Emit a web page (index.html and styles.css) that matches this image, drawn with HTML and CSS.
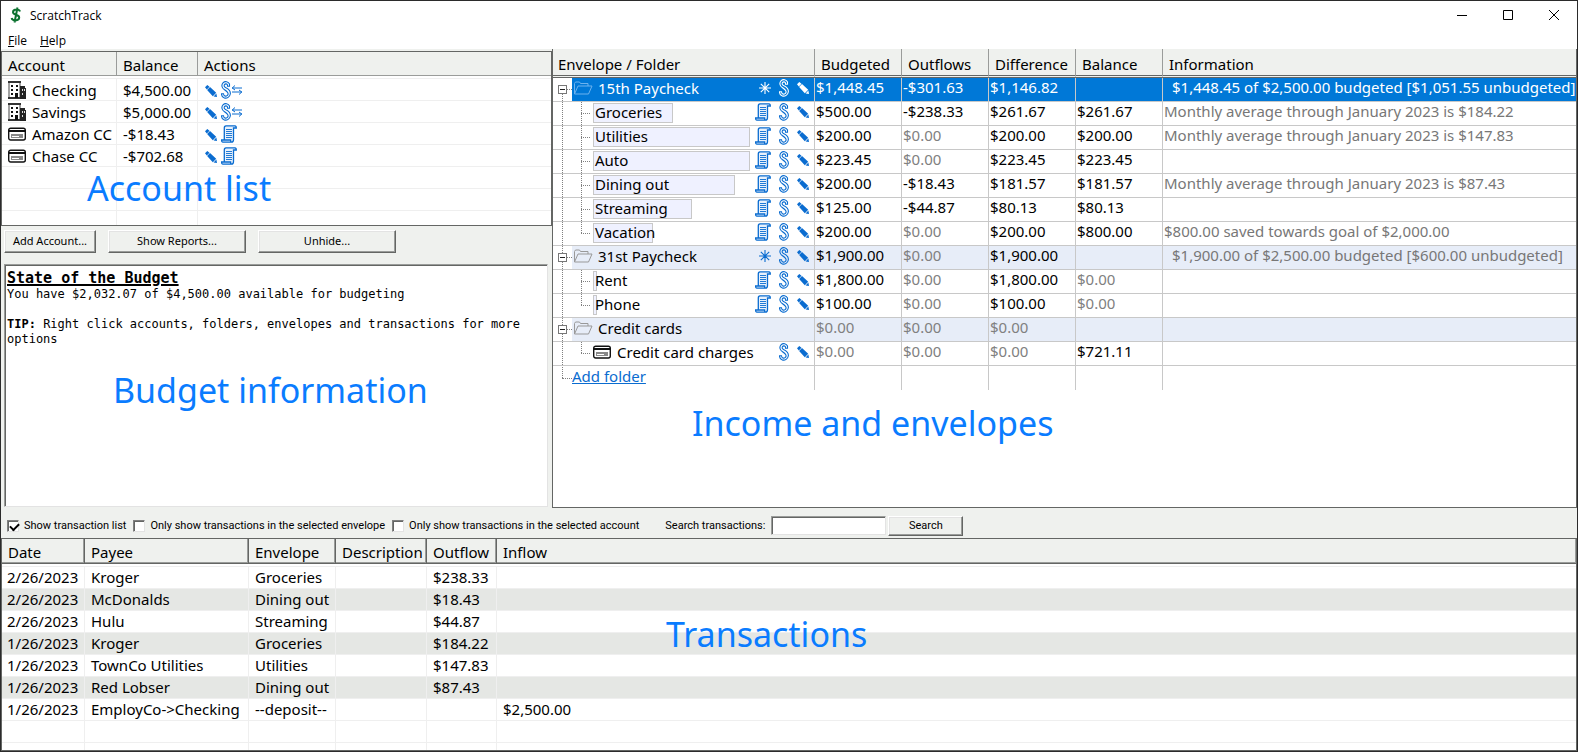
FILE: index.html
```
<!DOCTYPE html>
<html lang="en">
  <head>
    <meta charset="utf-8">
    <meta name="viewport" content="width=device-width, initial-scale=1">
    <title>ScratchTrack</title>
    <link rel="stylesheet" href="styles.css">
  </head>
  <body>

  <!-- Icons
  ================================================== -->
  <svg class="sprite" aria-hidden="true">
    <symbol id="bank" viewBox="0 0 18 18">
      <path d="M1 1h11v16H1z" fill="#fff" stroke="#444"/>
      <path d="M0 0h13v2H0zM0 16h18v2H0z" fill="#333"/>
      <path d="M3 4h2v2H3zM8 4h2v2H8zM3 8h2v2H3zM8 8h2v2H8zM3 12h2v2H3zM7 12h3v5H7z" fill="#111"/>
      <path d="M12 5h5v2h1v11h-6z" fill="#222"/>
      <path d="M14 8h1v2h-1zM16 8h1v2h-1zM14 12h1v2h-1z" fill="#ddd"/>
    </symbol>
    <symbol id="card" viewBox="0 0 18 14">
      <rect x=".7" y="1.200" width="16.600" height="11.800" rx="2" fill="#fff" stroke="#111" stroke-width="1.400"/>
      <path d="M1 3h16v2H1z" fill="#111"/>
      <path d="M3 7h12v4H3z" fill="#888"/>
      <path d="M4 9.500h7" stroke="#fff"/>
    </symbol>
    <symbol id="pencil" viewBox="0 0 12 12">
      <path d="M0 2.300L2.300 0l2.200 1.800-2.700 2.700zM2.100 5L5 2.100l6.200 5.700-3.400 3.400zM8.600 11.400l2.800-2.800L12 12z" fill="currentColor"/>
    </symbol>
    <symbol id="chain" viewBox="0 0 10 18">
      <path d="M3.200 8.500C.5 7 .3 3.500 2 1.800 4-.2 7.500.5 8.500 3v2.200H6.500V4C6 2.700 4.300 2.500 3.500 3.600 2.700 5 3.500 6 5 6.800c3 1.500 4.700 3.700 4.300 6.200-.5 3-3.300 4.700-6 4-1.800-.5-2.800-2-2.800-4.200h2c0 1.200.5 2 1.600 2.300 1.600.3 2.900-.8 3-2.200.1-1.600-1.200-2.600-3.900-4.400z" fill="none" stroke="currentColor" stroke-width="1.100"/>
    </symbol>
    <symbol id="swap" viewBox="0 0 12 10">
      <path d="M1 3h10M4 .5L1.200 3 4 5M1 7h10M8 5l2.800 2L8 9.500" fill="none" stroke="currentColor"/>
    </symbol>
    <symbol id="scroll" viewBox="0 0 16 18">
      <path d="M3.300 15V3C3.300 1.300 4 .8 5 .8h9c1 0 1.300 1 1.300 2.200H12.500v11.500c0 1.800-.8 2.700-2 2.700H2C.8 17.200.6 16 .6 15h9c0 1.500.5 2.200 1.200 2.200" fill="#e8f1fc" stroke="currentColor" stroke-width="1.300"/>
      <path d="M5 4.500h6M5 6.500h6M5 8.500h6M5 10.500h6M5 12.500h6" stroke="currentColor" stroke-width=".9"/>
    </symbol>
    <symbol id="star" viewBox="0 0 12 12">
      <path d="M6 0v12M0 6h12M1.800 1.800l8.400 8.400M10.200 1.800l-8.400 8.400" stroke="currentColor" stroke-width="1.100"/>
    </symbol>
    <symbol id="folder" viewBox="0 0 20 14">
      <path d="M1.500 13V2.500l1-1.500h4l1 1.500h7.500V5M1.500 13L5 5h14l-3.500 8z" fill="none" stroke="currentColor"/>
    </symbol>
  </svg>

  <div class="window">
    <header class="titlebar">
      <svg class="logo" viewBox="0 0 12 16"><path d="M10 4.500C9.500 3 8.200 2.600 6.500 2.600c-2 0-3.500 1-3.500 2.600C3 8.300 9.200 7.300 9.200 10.600c0 1.800-1.700 2.800-3.700 2.800C3.500 13.400 2 12.600 1.600 11M7.500.5L4.500 15.500" fill="none" stroke="#0c7230" stroke-width="2"/></svg>
      <span class="caption">ScratchTrack</span>
      <button class="win-btn" aria-label="Minimize"><svg viewBox="0 0 10 10"><path d="M0 5.500h10"/></svg></button>
      <button class="win-btn" aria-label="Maximize"><svg viewBox="0 0 10 10"><path d="M.5.5h9v9h-9z"/></svg></button>
      <button class="win-btn" aria-label="Close"><svg viewBox="0 0 10 10"><path d="M0 0l10 10M10 0L0 10"/></svg></button>
    </header>
    <nav class="menu">
      <button><u>F</u>ile</button>
      <button><u>H</u>elp</button>
    </nav>

    <main class="panes">
      <section class="left">
        <div class="accounts">
          <table class="list account-list">
            <colgroup><col class="c-account"><col class="c-amount"><col></colgroup>
            <thead><tr><th>Account</th><th>Balance</th><th>Actions</th></tr></thead>
            <tbody>
              <tr><td><svg class="i18"><use href="#bank"/></svg>Checking</td><td>$4,500.00</td><td class="acts"><svg class="i12"><use href="#pencil"/></svg><svg class="chain"><use href="#chain"/></svg><svg class="swap"><use href="#swap"/></svg></td></tr>
              <tr><td><svg class="i18"><use href="#bank"/></svg>Savings</td><td>$5,000.00</td><td class="acts"><svg class="i12"><use href="#pencil"/></svg><svg class="chain"><use href="#chain"/></svg><svg class="swap"><use href="#swap"/></svg></td></tr>
              <tr><td><svg class="i18"><use href="#card"/></svg>Amazon CC</td><td>-$18.43</td><td class="acts"><svg class="i12"><use href="#pencil"/></svg><svg class="scroll"><use href="#scroll"/></svg></td></tr>
              <tr><td><svg class="i18"><use href="#card"/></svg>Chase CC</td><td>-$702.68</td><td class="acts"><svg class="i12"><use href="#pencil"/></svg><svg class="scroll"><use href="#scroll"/></svg></td></tr>
              <tr><td></td><td></td><td></td></tr>
              <tr><td></td><td></td><td></td></tr>
              <tr><td></td><td></td><td></td></tr>
            </tbody>
          </table>
          <div class="note note-accounts">Account list</div>
        </div>
        <div class="buttons">
          <button class="btn btn-add">Add Account...</button>
          <button class="btn btn-wide">Show Reports...</button>
          <button class="btn btn-wide">Unhide...</button>
        </div>
        <div class="budget">
          <h2>State of the Budget</h2>
          <p>You have $2,032.07 of $4,500.00 available for budgeting</p>
          <p><b>TIP:</b> Right click accounts, folders, envelopes and transactions for more options</p>
          <div class="note note-budget">Budget information</div>
        </div>
      </section>

      <section class="right">
        <table class="tree">
          <colgroup><col class="c-name"><col class="c-money"><col class="c-money"><col class="c-money"><col class="c-money"><col></colgroup>
          <thead><tr><th>Envelope / Folder</th><th>Budgeted</th><th>Outflows</th><th>Difference</th><th>Balance</th><th>Information</th></tr></thead>
          <tbody id="envelopes"></tbody>
        </table>
        <div class="note note-envelopes">Income and envelopes</div>
      </section>
    </main>

    <form class="filters" onsubmit="return false">
      <label><input type="checkbox" checked>Show transaction list</label>
      <label><input type="checkbox">Only show transactions in the selected envelope</label>
      <label><input type="checkbox">Only show transactions in the selected account</label>
      <label class="search-label" for="search">Search transactions:</label>
      <input type="text" id="search">
      <button class="btn btn-search">Search</button>
    </form>

    <section class="transactions">
      <table class="list transaction-list">
        <colgroup><col class="c-date"><col class="c-payee"><col class="c-envelope"><col class="c-desc"><col class="c-outflow"><col></colgroup>
        <thead><tr><th>Date</th><th>Payee</th><th>Envelope</th><th>Description</th><th>Outflow</th><th>Inflow</th></tr></thead>
        <tbody>
          <tr><td>2/26/2023</td><td>Kroger</td><td>Groceries</td><td></td><td>$238.33</td><td></td></tr>
          <tr><td>2/26/2023</td><td>McDonalds</td><td>Dining out</td><td></td><td>$18.43</td><td></td></tr>
          <tr><td>2/26/2023</td><td>Hulu</td><td>Streaming</td><td></td><td>$44.87</td><td></td></tr>
          <tr><td>1/26/2023</td><td>Kroger</td><td>Groceries</td><td></td><td>$184.22</td><td></td></tr>
          <tr><td>1/26/2023</td><td>TownCo Utilities</td><td>Utilities</td><td></td><td>$147.83</td><td></td></tr>
          <tr><td>1/26/2023</td><td>Red Lobser</td><td>Dining out</td><td></td><td>$87.43</td><td></td></tr>
          <tr><td>1/26/2023</td><td>EmployCo-&gt;Checking</td><td>--deposit--</td><td></td><td></td><td>$2,500.00</td></tr>
          <tr class="blank"><td></td><td></td><td></td><td></td><td></td><td></td></tr>
          <tr class="blank"><td></td><td></td><td></td><td></td><td></td><td></td></tr>
        </tbody>
      </table>
      <div class="note note-transactions">Transactions</div>
    </section>
  </div>

  <script src="envelopes.js"></script>
  </body>
</html>
```

FILE: styles.css
```
* {
  box-sizing: border-box;
}
html, body {
  height: 100%;
}
body {
  margin: 0;
  font-family: "Noto Sans", "Open Sans", sans-serif;
  font-size: 15px;
  color: #000;
}
button, input {
  font-family: inherit;
}
table {
  width: 100%;
  table-layout: fixed;
  border-collapse: separate;
  border-spacing: 0;
}
th, td {
  padding: 0;
  text-align: left;
  font-weight: normal;
  white-space: nowrap;
}
.sprite {
  position: absolute;
  width: 0;
  height: 0;
}
.window {
  display: flex;
  flex-direction: column;
  min-height: 100%;
  border: 1px solid #2b2b2b;
  background: #eff1ee;
}

/* title bar and menu */
.titlebar {
  display: flex;
  align-items: center;
  height: 30px;
  padding: 0 0 2px 9px;
  background: #fff;
  font-family: "Open Sans", sans-serif;
  font-size: 12px;
}
.logo {
  width: 12px;
  height: 16px;
  margin-right: 8px;
}
.caption {
  flex: 1;
}
.win-btn {
  width: 46px;
  height: 28px;
  padding: 0;
  border: 0;
  background: none;
}
.win-btn svg {
  display: block;
  width: 10px;
  height: 10px;
  margin: auto;
  fill: none;
  stroke: #000;
}
.menu {
  display: flex;
  gap: 13px;
  height: 18px;
  padding: 2px 0 0 7px;
  background: #fff;
}
.menu button {
  padding: 0;
  border: 0;
  background: none;
  font-family: "Open Sans", sans-serif;
  font-size: 12px;
  line-height: 16px;
}

/* panes */
.panes {
  display: flex;
  flex: 1;
}
.left {
  display: flex;
  flex-direction: column;
  flex: none;
  width: 551px;
  padding-top: 2px;
}
.accounts {
  position: relative;
  height: 175px;
  overflow: hidden;
  border: 1px solid #646664;
  background: #fff;
}
.list th {
  height: 24px;
  padding: 2px 0 0 6px;
  line-height: 20px;
  border-right: 1px solid #9a9c9a;
  border-bottom: 1px solid #9a9c9a;
  background: #eff1ee;
}
.list td {
  height: 22px;
  padding-left: 6px;
  line-height: 21px;
  border-right: 1px solid #efefef;
  border-bottom: 1px solid #efefef;
}
.list th:last-child, .list td:last-child {
  border-right: 0;
}
.list tbody::before {
  content: "";
  display: block;
  height: 2px;
}
.list tbody tr:first-child td {
  height: 23px;
  border-top: 1px solid #efefef;
}
.account-list td {
  padding-top: 2px;
  line-height: 19px;
}
.list svg {
  vertical-align: top;
}
.c-account {
  width: 115px;
}
.c-amount {
  width: 81px;
}
.i18 {
  width: 18px;
  height: 18px;
  margin-right: 6px;
}
.i12 {
  width: 12px;
  height: 12px;
}
.chain {
  width: 10px;
  height: 18px;
}
.swap {
  width: 12px;
  height: 10px;
}
.scroll {
  width: 16px;
  height: 18px;
}
.i12, .chain, .swap, .scroll, .star {
  color: #0a6cd0;
}
.acts .i12 {
  margin: 4px 4px 0 1px;
}
.acts .swap {
  margin-top: 4px;
}
.buttons {
  display: flex;
  gap: 12px;
  padding: 4px 3px 11px;
}
.btn {
  height: 23px;
  padding: 0 0 2px;
  border: 1px solid;
  border-color: #fff #646664 #646664 #fff;
  box-shadow: inset -1px -1px 0 #9a9c9a, inset 1px 1px 0 #e3e3e3;
  background: #eff1ee;
  font-size: 11px;
  color: #000;
}
.btn-add {
  width: 92px;
}
.btn-wide {
  width: 138px;
}
.budget {
  position: relative;
  flex: 1;
  margin: 0 4px 1px 3px;
  padding: 5px 1px;
  border: 1px solid;
  border-color: #9a9c9a #e3e3e3 #e3e3e3 #9a9c9a;
  box-shadow: inset 1px 1px 0 #646664;
  background: #fff;
  font-family: "DejaVu Sans Mono", "Liberation Mono", monospace;
  font-size: 12px;
  line-height: 15px;
}
.budget h2 {
  margin: 0;
  padding-left: 1px;
  font-size: 15px;
  line-height: 17px;
  text-decoration: underline;
  text-decoration-thickness: 2px;
}
.budget p {
  margin: 0 0 15px;
  padding-left: 1px;
}

/* envelope tree */
.right {
  position: relative;
  flex: 1;
  border: 1px solid #646664;
  border-top: 0;
  background: #fff;
}
.c-name {
  width: 262px;
}
.c-money {
  width: 87px;
}
.tree th {
  height: 29px;
  padding: 3px 0 0 5px;
  line-height: 20px;
  border-right: 1px solid #9a9c9a;
  border-bottom: 3px double #646664;
  background: #eff1ee;
}
.tree th + th {
  padding-left: 6px;
}
.tree td {
  height: 24px;
  padding: 0 0 4px 1px;
  line-height: 19px;
  border-right: 1px solid #c8c8c8;
  border-bottom: 1px solid #c8c8c8;
}
.tree td:last-child, .tree th:last-child {
  border-right: 0;
}
.tree td:last-child {
  color: #777;
}
.tree .zero {
  color: #808080;
}
.tree td:first-child {
  padding: 0;
}
.cell {
  display: flex;
  align-items: center;
  height: 23px;
}
.label {
  display: flex;
  align-items: center;
  flex: 1;
  height: 23px;
  padding-bottom: 3px;
}
.tools {
  display: flex;
  align-items: center;
  gap: 8px;
  margin-left: auto;
  padding-right: 5px;
}
.star {
  width: 12px;
  height: 12px;
}
.folder-icon {
  width: 20px;
  height: 14px;
  margin: 0 5px 0 1px;
  color: #999;
}
.folder td, .folder .label {
  background: #e7edf8;
}
.folder td:first-child {
  background: #fff;
}
.folder td:last-child {
  padding-left: 9px;
}
.selected td, .selected td:last-child, .selected .label {
  background: #0078d7;
  color: #fff;
}
.selected .folder-icon {
  color: #6cb2ee;
}
.selected .tools svg {
  color: #fff;
}
.add td {
  border-bottom: 0;
}
.add a {
  padding-bottom: 3px;
  color: #0a6cd0;
}
.twisty {
  flex: none;
  position: relative;
  width: 19px;
  height: 23px;
}
.twisty::before {
  content: "";
  position: absolute;
  left: 9px;
  top: 0;
  bottom: 0;
  border-left: 1px dotted #808080;
}
.selected .twisty::before {
  top: 12px;
}
.add .twisty::before {
  bottom: 12px;
}
.twisty::after, .branch::after {
  content: "";
  position: absolute;
  top: 11px;
  left: 9px;
  right: 0;
  border-top: 1px dotted #808080;
}
.child .twisty::after {
  display: none;
}
.toggle {
  position: absolute;
  z-index: 1;
  left: 5px;
  top: 7px;
  width: 9px;
  height: 9px;
  padding: 0;
  border: 1px solid #777;
  background: linear-gradient(#222, #222) center / 5px 1px no-repeat #fff;
}
.branch {
  position: relative;
  flex: none;
  width: 18px;
  height: 23px;
  margin-right: 3px;
}
.branch::before {
  content: "";
  position: absolute;
  left: 9px;
  top: 0;
  bottom: 0;
  border-left: 1px dotted #808080;
}
.last .branch::before {
  bottom: 12px;
}
.meter {
  display: block;
  height: 20px;
  margin-top: 1px;
  padding-left: 1px;
  line-height: 17px;
  border: 1px solid #c8c8c8;
  background: #eff1ff;
}
.card-icon {
  width: 18px;
  height: 18px;
  margin-right: 6px;
}

/* filter bar */
.filters {
  display: flex;
  align-items: center;
  height: 30px;
  padding: 5px 6px 0;
  font-family: Roboto, sans-serif;
  font-size: 11px;
}
.filters label {
  display: flex;
  align-items: center;
  margin-right: 7px;
}
.filters input[type="checkbox"] {
  appearance: none;
  width: 12px;
  height: 12px;
  margin: 0 5px 0 0;
  border: 1px solid;
  border-color: #808080 #e3e3e3 #e3e3e3 #808080;
  box-shadow: inset 1px 1px 0 #646664;
  background: #fff;
}
.filters input:checked::before {
  content: "";
  display: block;
  width: 7px;
  height: 4px;
  margin: 2px 0 0 2px;
  border: solid #000;
  border-width: 0 0 2px 2px;
  transform: rotate(-45deg);
}
.filters .search-label {
  margin: 0 6px 0 19px;
}
#search {
  width: 115px;
  height: 19px;
  margin-right: 2px;
  padding: 0 2px;
  border: 1px solid;
  border-color: #9a9c9a #e3e3e3 #e3e3e3 #9a9c9a;
  box-shadow: inset 1px 1px 0 #646664;
}
.btn-search {
  width: 75px;
  height: 20px;
  padding: 0;
}

/* transactions */
.transactions {
  position: relative;
  height: 213px;
  overflow: hidden;
  border: 1px solid #646664;
  background: #fff;
}
.transaction-list th {
  height: 25px;
  border-color: #646664;
  box-shadow: inset -1px -1px 0 #9a9c9a;
}
.transaction-list td:first-child {
  padding-left: 5px;
}
.transaction-list tr:nth-child(even) td {
  background: #e5e7e4;
}
.transaction-list .blank td, .transaction-list .blank:nth-child(even) td {
  background: #fff;
}
.c-date {
  width: 83px;
}
.c-payee {
  width: 164px;
}
.c-envelope {
  width: 87px;
}
.c-desc {
  width: 91px;
}
.c-outflow {
  width: 70px;
}

/* big captions over each area */
.note {
  position: absolute;
  font-family: "Noto Sans", sans-serif;
  font-size: 34px;
  line-height: 48px;
  color: #0a7cff;
  white-space: nowrap;
  pointer-events: none;
}
.note-accounts {
  left: 85px;
  top: 112px;
}
.note-budget {
  left: 108px;
  top: 101px;
}
.note-envelopes {
  left: 139px;
  top: 350px;
}
.note-transactions {
  left: 664px;
  top: 71px;
}
```

FILE: envelopes.js
```
// type, name, meter width, budgeted, outflows, difference, balance, information
var rows = [
  ["folder selected", "15th Paycheck", 0, "$1,448.45", "-$301.63", "$1,146.82", "", "$1,448.45 of $2,500.00 budgeted [$1,051.55 unbudgeted]"],
  ["child", "Groceries", 80, "$500.00", "-$238.33", "$261.67", "$261.67", "Monthly average through January 2023 is $184.22"],
  ["child", "Utilities", 157, "$200.00", "$0.00", "$200.00", "$200.00", "Monthly average through January 2023 is $147.83"],
  ["child", "Auto", 157, "$223.45", "$0.00", "$223.45", "$223.45", ""],
  ["child", "Dining out", 142, "$200.00", "-$18.43", "$181.57", "$181.57", "Monthly average through January 2023 is $87.43"],
  ["child", "Streaming", 99, "$125.00", "-$44.87", "$80.13", "$80.13", ""],
  ["child last", "Vacation", 60, "$200.00", "$0.00", "$200.00", "$800.00", "$800.00 saved towards goal of $2,000.00"],
  ["folder", "31st Paycheck", 0, "$1,900.00", "$0.00", "$1,900.00", "", "$1,900.00 of $2,500.00 budgeted [$600.00 unbudgeted]"],
  ["child", "Rent", 4, "$1,800.00", "$0.00", "$1,800.00", "$0.00", ""],
  ["child last", "Phone", 4, "$100.00", "$0.00", "$100.00", "$0.00", ""],
  ["folder plain", "Credit cards", 0, "$0.00", "$0.00", "$0.00", "", ""],
  ["child last card", "Credit card charges", 0, "$0.00", "$0.00", "$0.00", "$721.11", ""],
  ["add", "Add folder", 0, "", "", "", "", ""]
];

function icon(cls, id) {
  return '<svg class="' + cls + '"><use href="#' + id + '"/></svg>';
}

function nameCell(type, name, width) {
  var html = '<span class="twisty">';
  if (type.indexOf("folder") == 0) {
    html += '<button class="toggle" aria-label="Collapse ' + name + '"></button>';
  }
  html += '</span>';
  if (type == "add") {
    return html + '<a href="#">' + name + '</a>';
  }
  if (type.indexOf("child") == 0) {
    html += '<span class="branch"></span>';
  }
  html += '<span class="label">';
  if (type.indexOf("folder") == 0) {
    html += icon("folder-icon", "folder") + name;
  } else if (type.indexOf("card") > 0) {
    html += icon("card-icon", "card") + name;
  } else {
    html += '<span class="meter" style="width:' + width + 'px">' + name + '</span>';
  }
  if (type != "folder plain") {
    html += '<span class="tools">';
    if (type.indexOf("folder") == 0) {
      html += icon("star", "star");
    } else if (type.indexOf("card") < 0) {
      html += icon("scroll", "scroll");
    }
    html += icon("chain", "chain") + icon("i12", "pencil") + '</span>';
  }
  return html + '</span>';
}

document.getElementById("envelopes").innerHTML = rows.map(function (row) {
  var html = '<tr class="' + row[0] + '"><td><div class="cell">' + nameCell(row[0], row[1], row[2]) + '</div></td>';
  for (var i = 3; i < row.length; i++) {
    html += '<td' + (row[i] == "$0.00" ? ' class="zero"' : '') + '>' + row[i] + '</td>';
  }
  return html + '</tr>';
}).join("");
```
